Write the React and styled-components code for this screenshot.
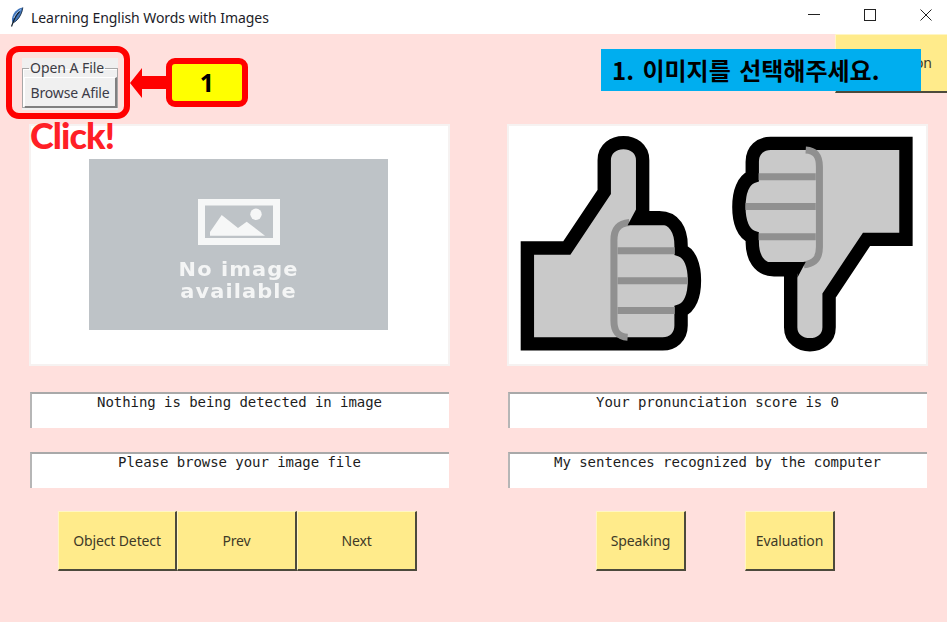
import React from "react";
import styled, { createGlobalStyle } from "styled-components";

const Global = createGlobalStyle`
  html, body { margin: 0; padding: 0; background: #ffe0dd; }
  * { box-sizing: border-box; }
`;

const Window = styled.div`
  position: relative;
  width: 947px;
  height: 622px;
  overflow: hidden;
  display: flex;
  flex-direction: column;
  background: #ffe0dd;
`;

const TitleBar = styled.header`
  height: 34px;
  flex: none;
  display: flex;
  align-items: center;
  background: #fff;
  padding-left: 9px;
  margin-right: -7px;
`;

const Title = styled.span`
  margin-left: 7px;
  font: 14px "Noto Sans", sans-serif;
  letter-spacing: -0.06px;
  color: #1c1c28;
  flex: 1;
`;

const WinButton = styled.span`
  width: 56px;
  height: 30px;
  display: flex;
  align-items: center;
  justify-content: center;
  margin-bottom: 4px;
`;

const TopBar = styled.div`
  height: 90px;
  flex: none;
  display: flex;
  justify-content: space-between;
  align-items: flex-start;
  padding-left: 22px;
`;

const FileGroup = styled.div`
  margin-top: 24px;
  width: 96px;
  height: 52px;
  background: #f0f0f0;
  padding: 3px 0 0 0;
`;

const Frame = styled.fieldset`
  margin: 0;
  height: 47px;
  padding: 0 0 0 1px;
  border: 1px solid #a8a8a8;
  box-shadow: inset 1px 1px 0 #fff;
  min-inline-size: 0;
`;

const Legend = styled.legend`
  margin-left: 5px;
  padding: 0 1px;
  font: 14px/14px "Noto Sans", sans-serif;
  letter-spacing: -0.05px;
  color: #3c3c44;
  white-space: nowrap;
`;

const BrowseButton = styled.button`
  display: block;
  width: 93px;
  height: 31px;
  margin: 2px 0 0 0;
  padding: 0;
  background: #f0f0f0;
  border: 0;
  border-top: 1px solid #fff;
  border-left: 1px solid #fff;
  border-right: 2px solid #808080;
  border-bottom: 2px solid #808080;
  font: 14px "Noto Sans", sans-serif;
  letter-spacing: -0.15px;
  color: #3c3c48;
`;

const TopAction = styled.button`
  width: 120px;
  height: 59px;
  margin-right: -8px;
  background: #ffeb8b;
  border: 0;
  border-top: 1px solid #fff6c4;
  border-left: 1px solid #fff6c4;
  border-bottom: 2px solid #4c4a3c;
  font: 14px "Noto Sans", sans-serif;
  color: #3e3a28;
  padding: 0 0 1px 0;
`;

const Columns = styled.main`
  display: grid;
  grid-template-columns: 421px 421px;
  column-gap: 57px;
  padding-left: 29px;
`;

const Column = styled.section`
  display: flex;
  flex-direction: column;
`;

const Panel = styled.div`
  width: 421px;
  height: 242px;
  background: #fff;
  border: 2px solid #f6f2f1;
  display: flex;
  align-items: center;
  justify-content: center;
`;

const Placeholder = styled.div`
  width: 299px;
  height: 171px;
  margin-bottom: 1px;
  margin-left: -2px;
  background: #bec3c7;
  display: flex;
  flex-direction: column;
  align-items: center;
  padding-top: 40px;
  filter: blur(0.3px);
`;

const PlaceholderText = styled.div`
  margin-top: 13px;
  text-align: center;
  font: 700 19px/22px "DejaVu Sans", sans-serif;
  letter-spacing: 1px;
  color: #f4f5f5;
  transform: scaleX(1.1);
`;

const Readout = styled.div`
  height: 36px;
  margin: ${(p) => p.$top}px 0 0 1px;
  width: 419px;
  background: #fff;
  border-top: 2px solid #a9a9a9;
  border-left: 2px solid #b6b6b6;
  padding-right: 2px;
  text-align: center;
  font: 14px/16px "DejaVu Sans Mono", monospace;
  letter-spacing: -0.05px;
  color: #1c1c1c;
  white-space: pre;
`;

const ButtonRow = styled.div`
  display: flex;
  margin: 23px 0 0 ${(p) => p.$indent}px;
  gap: ${(p) => p.$gap || 0}px;
`;

const ActionButton = styled.button`
  width: ${(p) => p.$w}px;
  height: 60px;
  padding: 0;
  background: #ffeb8b;
  border: 0;
  border-top: 1px solid #fff6c4;
  border-left: 1px solid #fff6c4;
  border-right: 2px solid #4c4a3c;
  border-bottom: 2px solid #4c4a3c;
  font: 14px "Noto Sans", sans-serif;
  letter-spacing: -0.12px;
  color: #3e3a28;
`;

/* Tutorial annotations laid over the application window */
const Banner = styled.div`
  position: absolute;
  left: 601px;
  top: 49px;
  width: 320px;
  height: 42px;
  background: #00aeef;
  padding-left: 11px;
  font: 700 24px/42px "Noto Sans CJK KR", "Noto Sans", sans-serif;
  letter-spacing: 0;
  word-spacing: 3px;
  color: #000;
  white-space: nowrap;
`;

const Highlight = styled.div`
  position: absolute;
  left: 6px;
  top: 46px;
  width: 124px;
  height: 73px;
  border: 6px solid #ff0000;
  border-radius: 13px;
`;

const Arrow = styled.svg`
  position: absolute;
  left: 129px;
  top: 67px;
`;

const Callout = styled.div`
  position: absolute;
  left: 166px;
  top: 58px;
  width: 82px;
  height: 49px;
  background: #ffff00;
  border: 6px solid #ff0000;
  border-radius: 9px;
  text-align: center;
  font: 700 25px/37px "Noto Sans", sans-serif;
  color: #000;
`;

const ClickNote = styled.div`
  position: absolute;
  left: 30px;
  top: 113px;
  font: 900 36px/44px "Lato", sans-serif;
  letter-spacing: -0.9px;
  color: #ff2026;
`;

const Feather = () => (
  <svg width="15" height="20" viewBox="0 0 15 20">
    <path d="M13.8 0.5C8 1.5 4 6 3 11.5 2.8 13.5 3 15 3.8 15.8 7.5 15 11 10.5 12.8 5.5 13.4 3.5 13.8 2 13.8 0.5Z" fill="#3f74bb" />
    <path d="M13.8 0.5C13.6 4 11.5 9.5 8 13 6.5 14.5 5 15.5 3.8 15.8" stroke="#2c3e52" strokeWidth="1" fill="none" />
    <path d="M10.5 4.5C7.5 7.5 4.5 13.5 2.5 19.5" stroke="#16222e" strokeWidth="1.2" fill="none" />
    <path d="M12 2.5C9 4 6 8 4.8 11" stroke="#a9c6e6" strokeWidth="0.9" fill="none" />
  </svg>
);

const Minimize = () => (
  <svg width="12" height="12" viewBox="0 0 12 12"><path d="M0 5.5H12" stroke="#222" fill="none" /></svg>
);
const Maximize = () => (
  <svg width="12" height="12" viewBox="0 0 12 12"><rect x="0.5" y="0.5" width="11" height="11" stroke="#222" fill="none" /></svg>
);
const Close = () => (
  <svg width="12" height="12" viewBox="0 0 12 12"><path d="M0.5 0.5L11.5 11.5M11.5 0.5L0.5 11.5" stroke="#222" fill="none" /></svg>
);

const PictureIcon = () => (
  <svg width="82" height="46" viewBox="0 0 82 46">
    <rect x="3.5" y="3" width="75" height="39.5" fill="none" stroke="#f6f7f7" strokeWidth="7" />
    <circle cx="58" cy="15.3" r="5.7" fill="#f6f7f7" />
    <path d="M12 36.7V33L23.7 16 40 29 48.7 22.7 67 36.7Z" fill="#f6f7f7" />
  </svg>
);

const Hand = () => (
  <g>
    <path
      d="M85 670V383H203L315 215V120C315 50 430 50 430 120V292H480C525 292 545 330 545 375V390C572 400 585 435 585 480C585 525 572 560 545 570V615C545 650 520 670 490 670Z"
      fill="#c9c9c9"
      stroke="#000"
      strokeWidth="40"
      strokeLinejoin="miter"
    />
    <path d="M390 307C355 310 344 330 344 360V600C344 632 355 648 385 650" fill="none" stroke="#909090" strokeWidth="21" />
    <path d="M355 391H526M355 481H565M355 570H526" fill="none" stroke="#909090" strokeWidth="21" />
    <path d="M410 268L385 315H500V280H410Z" fill="#000" />
  </g>
);

const Thumbs = () => (
  <svg width="417" height="238" viewBox="30 20 1248 708">
    <Hand />
    <g transform="rotate(180 651.5 370)">
      <Hand />
    </g>
  </svg>
);

export default function App() {
  return (
    <Window>
      <Global />
      <TitleBar>
        <Feather />
        <Title>Learning English Words with Images</Title>
        <WinButton><Minimize /></WinButton>
        <WinButton><Maximize /></WinButton>
        <WinButton><Close /></WinButton>
      </TitleBar>
      <TopBar>
        <FileGroup>
          <Frame>
            <Legend>Open A File</Legend>
            <BrowseButton>Browse Afile</BrowseButton>
          </Frame>
        </FileGroup>
        <TopAction>Translation</TopAction>
      </TopBar>
      <Columns>
        <Column>
          <Panel>
            <Placeholder>
              <PictureIcon />
              <PlaceholderText>No image<br />available</PlaceholderText>
            </Placeholder>
          </Panel>
          <Readout $top={26}>Nothing is being detected in image</Readout>
          <Readout $top={24}>Please browse your image file</Readout>
          <ButtonRow $indent={29}>
            <ActionButton $w={119}>Object Detect</ActionButton>
            <ActionButton $w={120}>Prev</ActionButton>
            <ActionButton $w={120}>Next</ActionButton>
          </ButtonRow>
        </Column>
        <Column>
          <Panel><Thumbs /></Panel>
          <Readout $top={26}>Your pronunciation score is 0</Readout>
          <Readout $top={24}>My sentences recognized by the computer</Readout>
          <ButtonRow $indent={89} $gap={59}>
            <ActionButton $w={90}>Speaking</ActionButton>
            <ActionButton $w={90}>Evaluation</ActionButton>
          </ButtonRow>
        </Column>
      </Columns>
      <Banner>1. 이미지를 선택해주세요.</Banner>
      <Highlight />
      <Arrow width="38" height="32" viewBox="0 0 38 32">
        <path d="M1 16L13 1V9H38V22H13V31Z" fill="#ff0000" />
      </Arrow>
      <Callout>1</Callout>
      <ClickNote>Click!</ClickNote>
    </Window>
  );
}
